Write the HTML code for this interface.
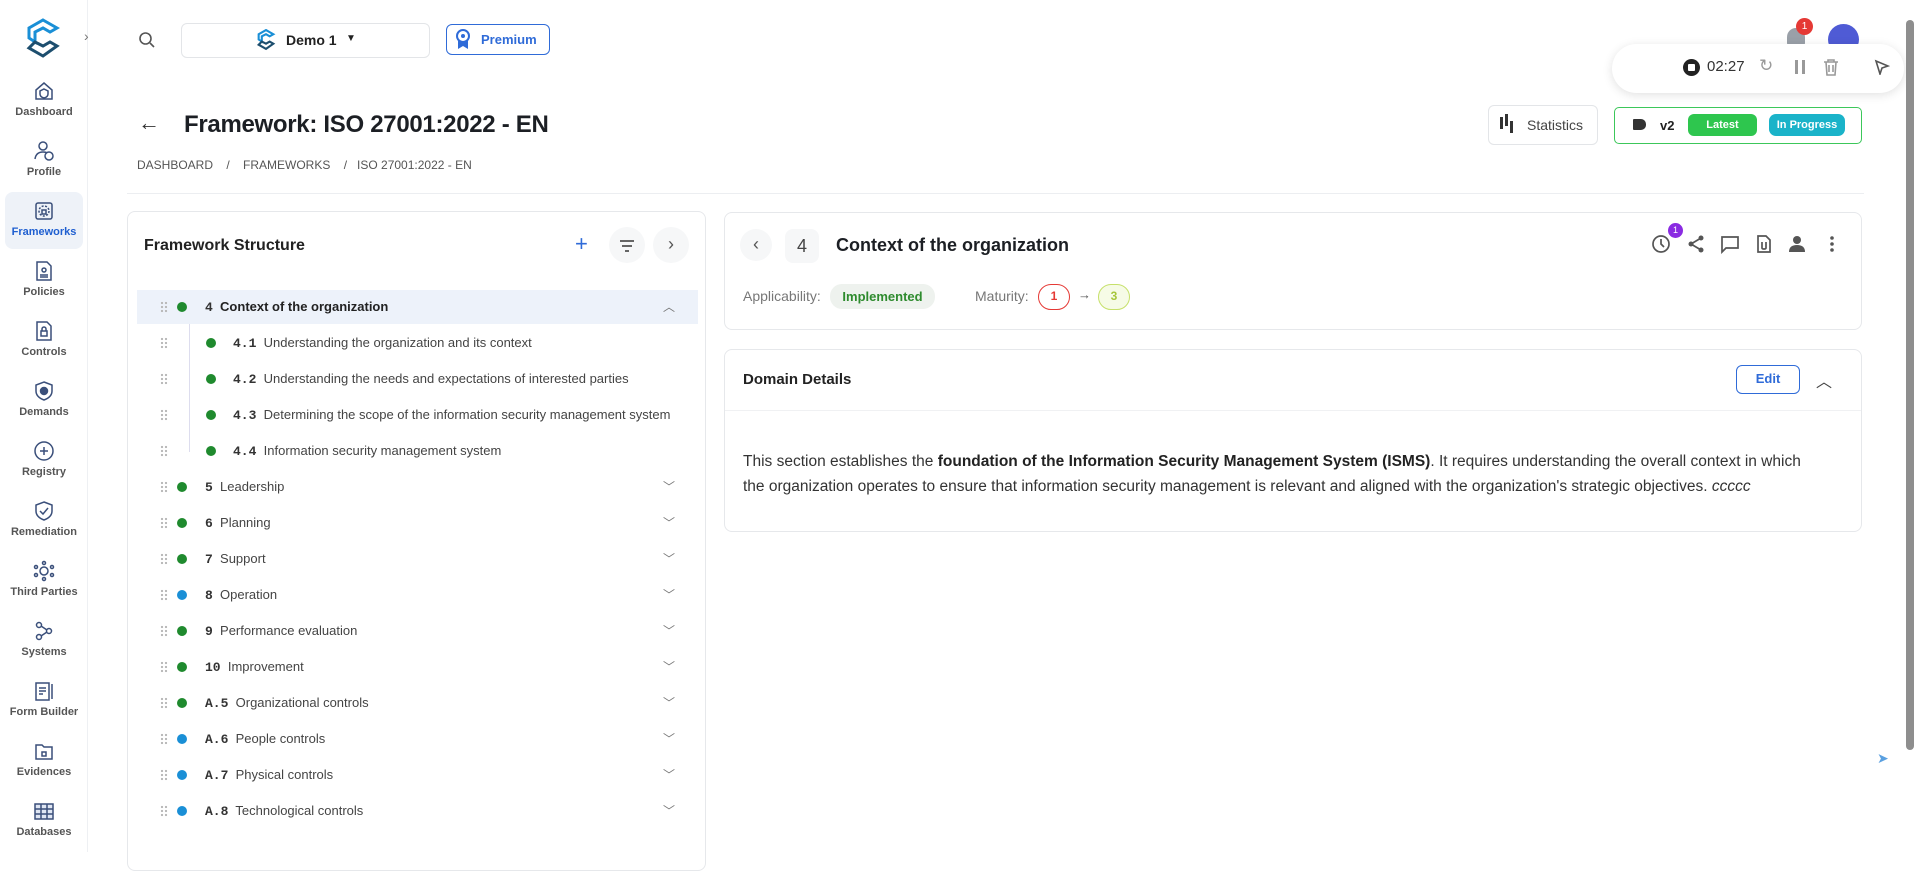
<!DOCTYPE html>
<html><head><meta charset="utf-8">
<style>
*{box-sizing:border-box;margin:0;padding:0}
body{width:1920px;height:852px;overflow:hidden;background:#fff;font-family:"Liberation Sans",sans-serif;color:#222;position:relative}
.abs{position:absolute}
.side{left:0;top:0;width:88px;height:852px;border-right:1px solid #eef0f3;background:#fff}
.nav{position:absolute;left:0;width:88px;text-align:center;font-size:11px;font-weight:bold;color:#555}
.nav svg{display:block;margin:0 auto 4px}
.mono{font-family:"Liberation Mono",monospace;font-weight:bold;color:#333}
.row{position:absolute;left:137px;width:561px;height:34px;font-size:13px;color:#444}
.row .h{position:absolute;left:23px;top:11px;width:8px;height:12px;background:radial-gradient(circle,#bbb 1.1px,transparent 1.3px) 0 0/4px 4px}
.row .d{position:absolute;top:12px;width:10px;height:10px;border-radius:50%}
.row .t{position:absolute;top:9px;white-space:nowrap}
.row .c{position:absolute;left:526px;top:8px;color:#777;font-size:12px}
.g{background:#1f8a2e}.b{background:#1a8fd6}
.card{border:1px solid #e6e8eb;border-radius:8px;background:#fff}
.ic{position:absolute;top:234px}
</style></head><body>

<div class="abs side">
  <svg class="abs" style="left:26px;top:18px" width="34" height="42" viewBox="0 0 34 42"><path d="M17 2 L31 10 L24 14 L17 10 L9 14 L9 24 L3 20 L3 10 Z" fill="none" stroke="#1a8fd6" stroke-width="3"/><path d="M9 24 L17 28 L24 24 L31 28 L17 38 L3 30 Z" fill="none" stroke="#1d4e6e" stroke-width="3"/></svg>
  <div class="abs" style="left:84px;top:28px;font-size:14px;color:#777">›</div>
  <div class="nav" style="top:80px"><svg width="22" height="22" viewBox="0 0 22 22" fill="none" stroke="#3a4f7a" stroke-width="1.5"><path d="M3 10 L11 3 L19 10 V19 H3Z"/><path d="M11 9 L15 11 V14 Q15 17 11 18 Q7 17 7 14 V11Z"/></svg>Dashboard</div>
  <div class="nav" style="top:140px"><svg width="22" height="22" viewBox="0 0 22 22" fill="none" stroke="#3a4f7a" stroke-width="1.5"><circle cx="10" cy="6" r="4"/><path d="M2 19 Q3 12 10 12 Q13 12 14 13"/><circle cx="16" cy="16" r="4"/></svg>Profile</div>
  <div class="abs" style="left:5px;top:192px;width:78px;height:57px;background:#eef2f8;border-radius:8px"></div>
  <div class="nav" style="top:200px;color:#1f5fd0"><svg width="22" height="22" viewBox="0 0 22 22" fill="none" stroke="#3a4f7a" stroke-width="1.5"><rect x="3" y="3" width="16" height="16" rx="2"/><circle cx="11" cy="11" r="5" stroke-dasharray="2 1.5"/><rect x="9" y="10" width="4" height="4"/></svg>Frameworks</div>
  <div class="nav" style="top:260px"><svg width="22" height="22" viewBox="0 0 22 22" fill="none" stroke="#3a4f7a" stroke-width="1.5"><path d="M4 2 H14 L18 6 V20 H4Z"/><circle cx="11" cy="10" r="2"/><path d="M7 15 H15 M7 17 H15"/></svg>Policies</div>
  <div class="nav" style="top:320px"><svg width="22" height="22" viewBox="0 0 22 22" fill="none" stroke="#3a4f7a" stroke-width="1.5"><path d="M4 2 H14 L18 6 V20 H4Z"/><rect x="8" y="11" width="6" height="5"/><path d="M9 11 V9 A2 2 0 0 1 13 9 V11"/></svg>Controls</div>
  <div class="nav" style="top:380px"><svg width="22" height="22" viewBox="0 0 22 22" fill="none" stroke="#3a4f7a" stroke-width="1.5"><path d="M11 2 L19 5 V11 Q19 17 11 20 Q3 17 3 11 V5Z"/><circle cx="11" cy="11" r="3.5" fill="#3a4f7a"/></svg>Demands</div>
  <div class="nav" style="top:440px"><svg width="22" height="22" viewBox="0 0 22 22" fill="none" stroke="#3a4f7a" stroke-width="1.5"><circle cx="11" cy="11" r="9"/><path d="M11 7 V15 M7 11 H15"/></svg>Registry</div>
  <div class="nav" style="top:500px"><svg width="22" height="22" viewBox="0 0 22 22" fill="none" stroke="#3a4f7a" stroke-width="1.5"><path d="M11 2 L19 5 V11 Q19 17 11 20 Q3 17 3 11 V5Z"/><path d="M7 11 L10 14 L15 8"/></svg>Remediation</div>
  <div class="nav" style="top:560px"><svg width="22" height="22" viewBox="0 0 22 22" fill="none" stroke="#3a4f7a" stroke-width="1.5"><circle cx="11" cy="11" r="4"/><circle cx="11" cy="3" r="1.5"/><circle cx="11" cy="19" r="1.5"/><circle cx="3" cy="7" r="1.5"/><circle cx="19" cy="7" r="1.5"/><circle cx="3" cy="15" r="1.5"/><circle cx="19" cy="15" r="1.5"/></svg>Third Parties</div>
  <div class="nav" style="top:620px"><svg width="22" height="22" viewBox="0 0 22 22" fill="none" stroke="#3a4f7a" stroke-width="1.5"><circle cx="6" cy="5" r="2.5"/><circle cx="16" cy="11" r="2.5"/><circle cx="6" cy="17" r="2.5"/><path d="M8 6 L14 10 M8 16 L14 12"/></svg>Systems</div>
  <div class="nav" style="top:680px"><svg width="22" height="22" viewBox="0 0 22 22" fill="none" stroke="#3a4f7a" stroke-width="1.5"><rect x="3" y="3" width="13" height="17"/><path d="M6 8 H13 M6 11 H13 M6 14 H10 M19 4 V19"/></svg>Form Builder</div>
  <div class="nav" style="top:740px"><svg width="22" height="22" viewBox="0 0 22 22" fill="none" stroke="#3a4f7a" stroke-width="1.5"><path d="M3 5 H9 L11 7 H19 V19 H3Z"/><rect x="9" y="12" width="4" height="4"/></svg>Evidences</div>
  <div class="nav" style="top:800px"><svg width="22" height="22" viewBox="0 0 22 22" fill="none" stroke="#3a4f7a" stroke-width="1.5"><rect x="2" y="4" width="18" height="15" fill="#dfe6f3"/><path d="M2 9 H20 M2 14 H20 M8 4 V19 M14 4 V19"/></svg>Databases</div>
</div>

<!-- top bar -->
<svg class="abs" style="left:138px;top:31px" width="18" height="18" viewBox="0 0 18 18" fill="none" stroke="#555" stroke-width="1.6"><circle cx="7.5" cy="7.5" r="5.5"/><path d="M12 12 L16 16"/></svg>
<div class="abs" style="left:181px;top:23px;width:249px;height:35px;border:1px solid #e3e5e8;border-radius:6px"></div>
<svg class="abs" style="left:256px;top:29px" width="20" height="22" viewBox="0 0 34 42"><path d="M17 2 L31 10 L24 14 L17 10 L9 14 L9 24 L3 20 L3 10 Z" fill="none" stroke="#1a8fd6" stroke-width="4"/><path d="M9 24 L17 28 L24 24 L31 28 L17 38 L3 30 Z" fill="none" stroke="#1d4e6e" stroke-width="4"/></svg>
<div class="abs" style="left:286px;top:32px;font-size:14px;font-weight:bold">Demo 1</div>
<div class="abs" style="left:346px;top:33px;font-size:10px">▼</div>
<div class="abs" style="left:446px;top:24px;width:104px;height:31px;border:1.5px solid #2f6bd8;border-radius:6px;color:#2f6bd8;font-size:13px;font-weight:bold;padding:7px 0 0 34px">Premium</div>
<svg class="abs" style="left:455px;top:29px" width="16" height="21" viewBox="0 0 16 21"><circle cx="8" cy="7" r="6" fill="none" stroke="#2f6bd8" stroke-width="2"/><path d="M3 12 V20 L8 17 L13 20 V12" fill="#2f6bd8"/><circle cx="8" cy="7" r="2" fill="#2f6bd8"/></svg>

<div class="abs" style="left:1787px;top:28px;width:18px;height:18px;border-radius:9px 9px 3px 3px;background:#9aa0a8"></div>
<div class="abs" style="left:1796px;top:18px;width:17px;height:17px;border-radius:50%;background:#e53935;color:#fff;font-size:10px;text-align:center;line-height:17px">1</div>
<div class="abs" style="left:1828px;top:24px;width:31px;height:31px;border-radius:50%;background:#4f5bd5"></div>
<div class="abs" style="left:1612px;top:44px;width:292px;height:49px;border-radius:25px;background:#fff;box-shadow:0 2px 10px rgba(0,0,0,.12)"></div>
<div class="abs" style="left:1683px;top:59px;width:17px;height:17px;border-radius:50%;background:#222"></div>
<div class="abs" style="left:1688px;top:64px;width:7px;height:7px;background:#fff;border-radius:1px"></div>
<div class="abs" style="left:1707px;top:58px;font-size:15px;color:#333">02:27</div>
<div class="abs" style="left:1759px;top:56px;font-size:17px;color:#999">↻</div>
<div class="abs" style="left:1795px;top:60px;width:3px;height:14px;background:#999;box-shadow:7px 0 0 #999"></div>
<svg class="abs" style="left:1823px;top:58px" width="16" height="18" viewBox="0 0 16 18" fill="none" stroke="#999" stroke-width="1.6"><path d="M1 4 H15 M5 4 V2 H11 V4 M3 4 L4 17 H12 L13 4 M6 7 V14 M10 7 V14"/></svg>
<svg class="abs" style="left:1874px;top:59px" width="16" height="16" viewBox="0 0 16 16" fill="none" stroke="#555" stroke-width="1.6"><path d="M2 2 L14 7 L8 9 L6 15Z"/></svg>
<div class="abs" style="left:1906px;top:20px;width:8px;height:730px;background:#8e8e8e;border-radius:4px"></div>
<div class="abs" style="left:1877px;top:750px;color:#5aa0e0;font-size:14px">➤</div>

<!-- title -->
<div class="abs" style="left:138px;top:110px;font-size:22px;color:#333">←</div>
<div class="abs" style="left:184px;top:111px;font-size:24px;font-weight:bold;color:#1c1f24;letter-spacing:-0.3px">Framework: ISO 27001:2022 - EN</div>
<div class="abs" style="left:137px;top:158px;font-size:12px;color:#555">DASHBOARD &nbsp;&nbsp;&nbsp;/&nbsp;&nbsp;&nbsp; FRAMEWORKS &nbsp;&nbsp;&nbsp;/&nbsp;&nbsp; ISO 27001:2022 - EN</div>
<div class="abs" style="left:1488px;top:105px;width:110px;height:40px;border:1px solid #e3e5e8;border-radius:6px;font-size:14px;color:#444;padding:11px 0 0 38px">Statistics</div>
<div class="abs" style="left:1500px;top:117px;width:3px;height:12px;background:#333;box-shadow:5px -3px 0 #333,10px 4px 0 #333"></div>
<div class="abs" style="left:1614px;top:107px;width:248px;height:37px;border:1.5px solid #3cc75a;border-radius:5px"></div>
<div class="abs" style="left:1633px;top:119px;width:13px;height:11px;background:#333;border-radius:1px 5px 5px 1px"></div>
<div class="abs" style="left:1660px;top:118px;font-size:13px;font-weight:bold">v2</div>
<div class="abs" style="left:1688px;top:114px;width:69px;height:22px;border-radius:6px;background:#2ec64e;color:#fff;font-size:11px;font-weight:bold;text-align:center;line-height:22px">Latest</div>
<div class="abs" style="left:1769px;top:114px;width:76px;height:22px;border-radius:7px;background:#1ab3c9;color:#fff;font-size:11px;font-weight:bold;text-align:center;line-height:22px">In Progress</div>
<div class="abs" style="left:127px;top:193px;width:1737px;height:1px;background:#eceef1"></div>

<!-- left panel -->
<div class="abs card" style="left:127px;top:211px;width:579px;height:660px"></div>
<div class="abs" style="left:144px;top:237px;font-size:16px;font-weight:bold;color:#222">Framework Structure</div>
<div class="abs" style="left:575px;top:231px;font-size:22px;color:#2f6bd8">+</div>
<div class="abs" style="left:609px;top:227px;width:36px;height:36px;border-radius:50%;background:#f6f7f8"></div>
<div class="abs" style="left:620px;top:240px;width:14px;height:2px;background:#666"></div>
<div class="abs" style="left:622px;top:245px;width:10px;height:2px;background:#666"></div>
<div class="abs" style="left:625px;top:250px;width:4px;height:2px;background:#666"></div>
<div class="abs" style="left:653px;top:227px;width:36px;height:36px;border-radius:50%;background:#f6f7f8;text-align:center;line-height:34px;color:#555;font-size:18px">›</div>

<div class="abs" style="left:137px;top:290px;width:561px;height:34px;background:#edf2fa"></div>
<div class="abs" style="left:189px;top:324px;width:1px;height:128px;background:#dde"></div>
<div class="row" style="top:290px"><i class="h"></i><i class="d g" style="left:40px"></i><span class="t" style="left:68px"><b class="mono">4</b>&nbsp; <b style="color:#222">Context of the organization</b></span><span class="c">︿</span></div>
<div class="row" style="top:326px"><i class="h"></i><i class="d g" style="left:69px"></i><span class="t" style="left:96px"><span class="mono">4.1</span>&nbsp; Understanding the organization and its context</span></div>
<div class="row" style="top:362px"><i class="h"></i><i class="d g" style="left:69px"></i><span class="t" style="left:96px"><span class="mono">4.2</span>&nbsp; Understanding the needs and expectations of interested parties</span></div>
<div class="row" style="top:398px"><i class="h"></i><i class="d g" style="left:69px"></i><span class="t" style="left:96px"><span class="mono">4.3</span>&nbsp; Determining the scope of the information security management system</span></div>
<div class="row" style="top:434px"><i class="h"></i><i class="d g" style="left:69px"></i><span class="t" style="left:96px"><span class="mono">4.4</span>&nbsp; Information security management system</span></div>
<div class="row" style="top:470px"><i class="h"></i><i class="d g" style="left:40px"></i><span class="t" style="left:68px"><span class="mono">5</span>&nbsp; Leadership</span><span class="c">﹀</span></div>
<div class="row" style="top:506px"><i class="h"></i><i class="d g" style="left:40px"></i><span class="t" style="left:68px"><span class="mono">6</span>&nbsp; Planning</span><span class="c">﹀</span></div>
<div class="row" style="top:542px"><i class="h"></i><i class="d g" style="left:40px"></i><span class="t" style="left:68px"><span class="mono">7</span>&nbsp; Support</span><span class="c">﹀</span></div>
<div class="row" style="top:578px"><i class="h"></i><i class="d b" style="left:40px"></i><span class="t" style="left:68px"><span class="mono">8</span>&nbsp; Operation</span><span class="c">﹀</span></div>
<div class="row" style="top:614px"><i class="h"></i><i class="d g" style="left:40px"></i><span class="t" style="left:68px"><span class="mono">9</span>&nbsp; Performance evaluation</span><span class="c">﹀</span></div>
<div class="row" style="top:650px"><i class="h"></i><i class="d g" style="left:40px"></i><span class="t" style="left:68px"><span class="mono">10</span>&nbsp; Improvement</span><span class="c">﹀</span></div>
<div class="row" style="top:686px"><i class="h"></i><i class="d g" style="left:40px"></i><span class="t" style="left:68px"><span class="mono">A.5</span>&nbsp; Organizational controls</span><span class="c">﹀</span></div>
<div class="row" style="top:722px"><i class="h"></i><i class="d b" style="left:40px"></i><span class="t" style="left:68px"><span class="mono">A.6</span>&nbsp; People controls</span><span class="c">﹀</span></div>
<div class="row" style="top:758px"><i class="h"></i><i class="d b" style="left:40px"></i><span class="t" style="left:68px"><span class="mono">A.7</span>&nbsp; Physical controls</span><span class="c">﹀</span></div>
<div class="row" style="top:794px"><i class="h"></i><i class="d b" style="left:40px"></i><span class="t" style="left:68px"><span class="mono">A.8</span>&nbsp; Technological controls</span><span class="c">﹀</span></div>

<!-- right top card -->
<div class="abs card" style="left:724px;top:212px;width:1138px;height:118px"></div>
<div class="abs" style="left:740px;top:229px;width:32px;height:32px;border-radius:50%;background:#f6f7f8;text-align:center;line-height:30px;color:#555;font-size:18px">‹</div>
<div class="abs" style="left:785px;top:229px;width:34px;height:34px;border-radius:8px;background:#f6f7f8;text-align:center;line-height:34px;color:#444;font-size:18px">4</div>
<div class="abs" style="left:836px;top:235px;font-size:18px;font-weight:bold;color:#1c1f24">Context of the organization</div>
<svg class="ic" style="left:1651px" width="20" height="20" viewBox="0 0 20 20" fill="none" stroke="#555" stroke-width="1.7"><circle cx="10" cy="10" r="8"/><path d="M10 5 V10 L13 13"/></svg>
<div class="abs" style="left:1668px;top:223px;width:15px;height:15px;border-radius:50%;background:#8a2be2;color:#fff;font-size:9px;text-align:center;line-height:15px">1</div>
<svg class="ic" style="left:1686px" width="20" height="20" viewBox="0 0 20 20"><circle cx="15" cy="4" r="2.5" fill="#555"/><circle cx="5" cy="10" r="2.5" fill="#555"/><circle cx="15" cy="16" r="2.5" fill="#555"/><path d="M15 4 L5 10 L15 16" stroke="#555" stroke-width="1.7" fill="none"/></svg>
<svg class="ic" style="left:1720px" width="20" height="20" viewBox="0 0 20 20" fill="none" stroke="#555" stroke-width="1.7"><path d="M2 3 H18 V14 H6 L2 18Z"/></svg>
<svg class="ic" style="left:1754px" width="20" height="20" viewBox="0 0 20 20" fill="none" stroke="#555" stroke-width="1.7"><path d="M4 2 H12 L16 6 V18 H4Z"/><path d="M8 8 V14 Q8 15 10 15 Q12 15 12 14 V8"/></svg>
<svg class="ic" style="left:1787px" width="20" height="20" viewBox="0 0 20 20" fill="#555"><circle cx="10" cy="6" r="4"/><path d="M2 18 Q2 11 10 11 Q18 11 18 18Z"/></svg>
<svg class="ic" style="left:1822px" width="20" height="20" viewBox="0 0 20 20" fill="#555"><circle cx="10" cy="4" r="1.8"/><circle cx="10" cy="10" r="1.8"/><circle cx="10" cy="16" r="1.8"/></svg>
<div class="abs" style="left:743px;top:288px;font-size:14px;color:#777">Applicability:</div>
<div class="abs" style="left:830px;top:284px;width:105px;height:25px;border-radius:12px;background:#eef2ee;color:#2e8b2e;font-size:13px;font-weight:bold;text-align:center;line-height:25px">Implemented</div>
<div class="abs" style="left:975px;top:288px;font-size:14px;color:#777">Maturity:</div>
<div class="abs" style="left:1038px;top:284px;width:32px;height:26px;border-radius:13px;border:1.5px solid #e53935;color:#e53935;font-size:12px;font-weight:bold;text-align:center;line-height:23px">1</div>
<div class="abs" style="left:1078px;top:287px;font-size:13px;color:#555">→</div>
<div class="abs" style="left:1098px;top:284px;width:32px;height:26px;border-radius:13px;border:1.5px solid #c6e06a;background:#f6fbe6;color:#a6c63a;font-size:12px;font-weight:bold;text-align:center;line-height:23px">3</div>

<!-- domain card -->
<div class="abs card" style="left:724px;top:349px;width:1138px;height:183px"></div>
<div class="abs" style="left:743px;top:371px;font-size:15px;font-weight:bold;color:#222">Domain Details</div>
<div class="abs" style="left:1736px;top:365px;width:64px;height:29px;border:1.5px solid #2f6bd8;border-radius:6px;color:#2f6bd8;font-size:13px;font-weight:bold;text-align:center;line-height:26px">Edit</div>
<div class="abs" style="left:1816px;top:368px;font-size:16px;color:#444">︿</div>
<div class="abs" style="left:725px;top:410px;width:1136px;height:1px;background:#f0f1f3"></div>
<div class="abs" style="left:743px;top:449px;width:1080px;font-size:15.5px;line-height:25px;color:#333">This section establishes the <b style="color:#222">foundation of the Information Security Management System (ISMS)</b>. It requires understanding the overall context in which the organization operates to ensure that information security management is relevant and aligned with the organization's strategic objectives. <i>ccccc</i></div>
</body></html>
